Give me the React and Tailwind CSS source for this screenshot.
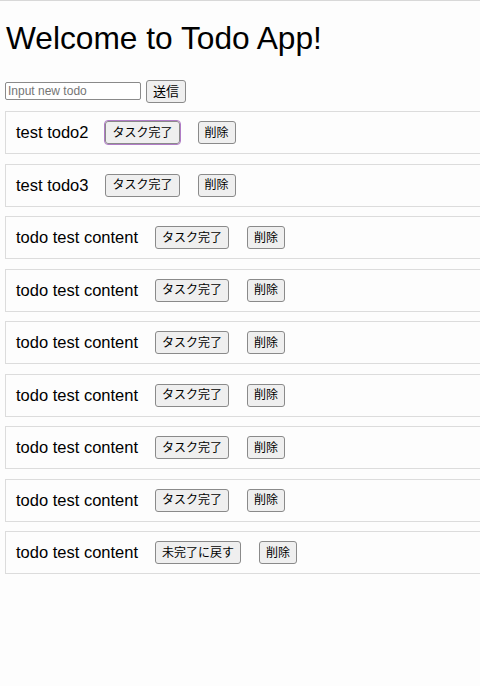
import React, { useState } from 'react';

const initialTodos = [
    { id: 1, content: 'test todo2', done: false },
    { id: 2, content: 'test todo3', done: false },
    { id: 3, content: 'todo test content', done: false },
    { id: 4, content: 'todo test content', done: false },
    { id: 5, content: 'todo test content', done: false },
    { id: 6, content: 'todo test content', done: false },
    { id: 7, content: 'todo test content', done: false },
    { id: 8, content: 'todo test content', done: false },
    { id: 9, content: 'todo test content', done: true },
];

const btn = "h-[23px] px-[6px] text-[12px] leading-none bg-[#efefef] border border-[#8a8a8a] rounded-[3px] text-black";

const TodoItem = ({ todo, focused, onToggle, onDelete }) => (
    <li className="flex items-center w-[520px] h-[43px] pl-[10px] border border-[#dcdcdc] mt-[9.5px]">
        <span className="text-[16.5px] text-black">{todo.content}</span>
        <button
            className={`${btn} ml-[17px] ${focused ? 'outline outline-[1px] outline-[#b07cc6]' : ''}`}
            onClick={() => onToggle(todo.id)}
        >
            {todo.done ? '未完了に戻す' : 'タスク完了'}
        </button>
        <button className={`${btn} ml-[18px]`} onClick={() => onDelete(todo.id)}>
            削除
        </button>
    </li>
);

export default function App() {
    const [todos, setTodos] = useState(initialTodos);
    const [text, setText] = useState('');

    const addTodo = () => {
        if (!text) return;
        setTodos([...todos, { id: Date.now(), content: text, done: false }]);
        setText('');
    };

    return (
        <div
            className="w-[480px] h-[686px] overflow-hidden bg-[#fdfdfd] border-t border-[#d8d8d8] text-black"
            style={{ fontFamily: '"Liberation Sans", "Noto Sans CJK JP", Arial, sans-serif' }}
        >
            <h1 className="text-[31.7px] leading-none font-normal pl-[6px] pt-[22px]">Welcome to Todo App!</h1>

            {/* input row */}
            <div className="flex items-center pl-[5px] mt-[25px]">
                <input
                    type="text"
                    placeholder="Input new todo"
                    value={text}
                    onChange={(e) => setText(e.target.value)}
                    className="w-[136px] h-[18px] px-[2px] text-[12px] border border-[#8a8a8a] rounded-[2px] bg-white placeholder:text-[#757575]"
                />
                <button className={`${btn} h-[22px] ml-[5px] px-[4px] text-[13px]`} onClick={addTodo}>送信</button>
            </div>

            <ul className="pl-[5px] -mt-[1px]">
                {todos.map((todo, i) => (
                    <TodoItem
                        key={todo.id}
                        todo={todo}
                        focused={i === 0}
                        onToggle={(id) => setTodos(todos.map(t => t.id === id ? { ...t, done: !t.done } : t))}
                        onDelete={(id) => setTodos(todos.filter(t => t.id !== id))}
                    />
                ))}
            </ul>
        </div>
    );
}
